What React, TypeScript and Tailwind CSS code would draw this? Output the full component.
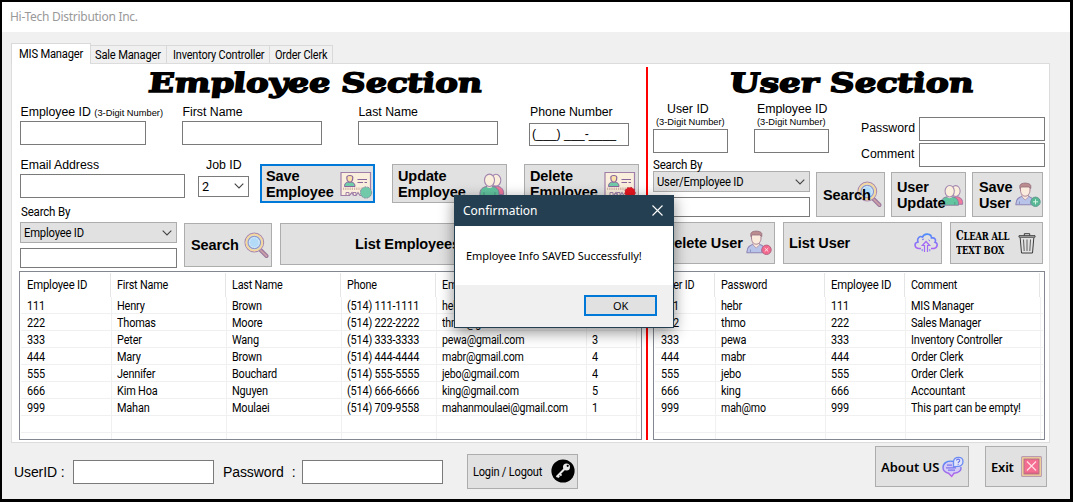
import React from "react";

type IconProps = { className?: string };

function IdCard({ className = "", badge = "green" }: IconProps & { badge?: "green" | "red" }) {
  return (
    <svg className={className} width="33" height="30" viewBox="0 0 33 30" fill="none">
      <path d="M1 1.5H30.5V24.5H20L18 21.5L16 24.5H14L12 21.5L9.5 24.5H1Z" fill="#faefdd" stroke="#a07fa8" strokeWidth="1.2" />
      <path d="M4.5 15.5C4.5 11.5 7 11 9.5 11C12 11 15 11.5 15 15.5Z" fill="#70cba9" stroke="#8a659c" strokeWidth="1" />
      <path d="M6.8 6.5C6.8 3.8 12.8 3.8 12.8 6.5C12.8 9.5 11.5 11.2 9.8 11.2C8.2 11.2 6.8 9.5 6.8 6.5Z" fill="#fbe1a9" stroke="#8a659c" strokeWidth="1.2" />
      <path d="M17.5 8.5H27M17.5 11.5H23M24.5 11.5H27" stroke="#8a659c" strokeWidth="1.2" />
      <path d="M3 17.8H25" stroke="#d5b7ab" strokeWidth="2.4" strokeDasharray="1.2 1" />
      <path d="M6 24.5V21.5H9V24.5M13 24.5V21.5H16V24.5" stroke="#a07fa8" />
      {badge === "green" ? (
        <circle cx="26" cy="21.5" r="5.6" fill="#70c9a8" stroke="#7c86a0" strokeWidth="1" strokeDasharray="2 1" />
      ) : (
        <circle cx="26" cy="21.5" r="5.2" fill="#eb1620" stroke="#b43a4a" strokeWidth="1.2" strokeDasharray="1.5 2" />
      )}
    </svg>
  );
}

function People({ className = "", small = false }: IconProps & { small?: boolean }) {
  return (
    <svg className={className} width={small ? 24 : 26} height={small ? 23 : 24} viewBox="0 0 26 24" fill="none">
      <path d="M14 21.5H24.5C25 16.5 22.5 14 18.5 13.2L14 14Z" fill="#f07a9e" stroke="#9b74a4" />
      <ellipse cx="17" cy="7.2" rx="4.8" ry="5.9" fill="#faefdd" stroke="#a486b0" strokeWidth="1.1" />
      <path d="M1 22.5C0.5 16 3.5 13.5 10.5 13.2C17.5 13.5 20.5 16 20 22.5Z" fill="#63c6a0" stroke="#8d7ba0" />
      <path d="M8 12V14C9 15.2 12 15.2 13 14V12Z" fill="#faefdd" />
      <ellipse cx="10.5" cy="7.3" rx="5" ry="6.2" fill="#faefdd" stroke="#a486b0" strokeWidth="1.1" />
      <path d="M5 22V19M16 22V19" stroke="#4c9f88" />
    </svg>
  );
}

function Magnifier({ className = "" }: IconProps) {
  return (
    <svg className={className} width="26" height="27" viewBox="0 0 26 27" fill="none">
      <path d="M16.5 18L22.5 24" stroke="#9b769d" strokeWidth="4" strokeLinecap="round" />
      <path d="M17 18.6L22.5 24" stroke="#c99fa8" strokeWidth="1.8" strokeLinecap="round" />
      <circle cx="10.3" cy="10.5" r="9.3" fill="#dfe9f7" stroke="#a988ae" strokeWidth="1.2" />
      <circle cx="10.3" cy="10.5" r="7.9" stroke="#f3d79c" strokeWidth="2" />
      <circle cx="10.3" cy="10.5" r="6.3" fill="#b3daf7" stroke="#8f94c4" strokeWidth="1.1" />
      <circle cx="10.3" cy="10.5" r="4.8" stroke="#e3edf8" strokeWidth="1" strokeDasharray="2 1" />
    </svg>
  );
}

function Person({ className = "", badge }: IconProps & { badge: "plus" | "cross" }) {
  return (
    <svg className={className} width="27" height="26" viewBox="0 0 27 26" fill="none">
      <path d="M1 22.8C0.5 17 3.5 14.6 10 13.8C17 14.6 20 17 19.5 22.8Z" fill="#b8c3ea" stroke="#8f86b4" strokeWidth="1.1" />
      <path d="M7 12V15L10.2 18L13.5 15V12Z" fill="#f7e6da" stroke="#a98ea8" strokeWidth="0.8" />
      <path d="M5.5 6C5.5 1.5 15 1.5 15 6V8C15 11.5 13 14.2 10.2 14.2C7.5 14.2 5.5 11.5 5.5 8Z" fill="#faebdc" stroke="#a98295" strokeWidth="1" />
      <path d="M4.8 6.5V3.5C6 0.3 14.5 0.3 15.8 3.5V6.5L14 5H6.5Z" fill="#bb8b8e" stroke="#94707f" strokeWidth="0.8" />
      <path d="M4.5 22.5V19.5M15.5 22V19.5" stroke="#8f94c4" />
      <circle cx="20.5" cy="19.8" r="4.7" fill={badge === "plus" ? "#57b894" : "#f2688c"} stroke={badge === "plus" ? "#639c93" : "#b66586"} />
      {badge === "plus" ? (
        <path d="M18 19.8H23M20.5 17.3V22.3" stroke="#d5f5e4" />
      ) : (
        <path d="M18.7 18L22.3 21.6M22.3 18L18.7 21.6" stroke="#ffe0e6" />
      )}
    </svg>
  );
}

function CloudUp() {
  return (
    <svg width="24" height="20" viewBox="0 0 24 20" fill="none">
      <defs>
        <linearGradient id="cloud" x1="0" y1="0" x2="0" y2="1">
          <stop stopColor="#4f8dfb" />
          <stop offset="1" stopColor="#aa65f4" />
        </linearGradient>
      </defs>
      <path d="M7 15.5H4.5C0 15 0 9.5 4 9C2.5 4.5 6.5 2.5 8.5 4.2C10 -0.3 17.5 0.3 17.5 5C21 4.2 22.3 7 21 9.2C24.5 10 23.5 15 20 15.5H17" stroke="url(#cloud)" strokeWidth="1.6" />
      <path d="M10.5 19V12.5H8.3L12 8.5L15.7 12.5H13.5V19" stroke="#a26af5" strokeWidth="1.2" />
      <path d="M8.2 18.2V16M15.8 18.2V16M8 6.8L10 6M14.5 6.8L16 8" stroke="#7b7cf6" />
    </svg>
  );
}

function Trash({ className = "" }: IconProps) {
  return (
    <svg className={className} width="18" height="21" viewBox="0 0 18 21" fill="none" stroke="#3c3c3c">
      <path d="M1 4.2V2.7H17V4.2Z" strokeWidth="1" />
      <path d="M6.3 2.5V0.7H11.7V2.5M2.2 5L3.5 20H14.5L15.8 5" />
      <path d="M5.5 6.5L6.2 18M9 6.5V18M12.5 6.5L11.8 18" strokeWidth="0.8" />
    </svg>
  );
}

function KeyBadge({ className = "" }: IconProps) {
  return (
    <svg className={className} width="24" height="24" viewBox="0 0 24 24" fill="none">
      <circle cx="12" cy="12" r="11.6" fill="#000" />
      <circle cx="15.5" cy="8" r="3.5" fill="#e9e9e9" />
      <circle cx="16.7" cy="6.8" r="1.1" fill="#000" />
      <path d="M13.5 10L5.5 18M8.8 14.9L10.5 16.6M6.8 16.8L8.2 18.2" stroke="#e9e9e9" strokeWidth="2" />
    </svg>
  );
}

function ChatHelp() {
  return (
    <svg width="22" height="22" viewBox="0 0 22 22" fill="none">
      <defs>
        <linearGradient id="chat" x1="0" y1="0" x2="0" y2="1">
          <stop stopColor="#5488f5" />
          <stop offset="1" stopColor="#bb60e9" />
        </linearGradient>
      </defs>
      <path d="M12 5.5C5 4 1 7.5 1 11.5C1 15 3.5 16.5 6.5 17.2L9.7 20.5L12 17.3C17 17 19.5 14.5 19 11" fill="#d3cbf5" stroke="url(#chat)" strokeWidth="1.4" />
      <path d="M11.5 10.5V5.5C12 0 21 0 21 5.5C21 9 18.5 10.5 15.5 10.3L11.5 11Z" fill="#e2e5fa" stroke="#6c8cf2" strokeWidth="1.3" />
      <path d="M14.5 4.5C14.7 2.5 18 2.7 17.7 4.8C17.5 5.8 16.2 5.8 16.2 7V7.3M16.2 8.2V9" stroke="#6572e8" strokeWidth="1.1" />
      <path d="M5 9.2H10M4 11.8H14M6 14.2H13" stroke="#7d75ee" strokeWidth="1.3" />
    </svg>
  );
}

function ExitIcon() {
  return (
    <svg width="21" height="21" viewBox="0 0 21 21" fill="none">
      <rect x="0.6" y="0.6" width="19.8" height="19.8" rx="1" fill="#f6d796" stroke="#b99ab0" strokeWidth="1.1" />
      <rect x="3" y="3" width="15" height="15" fill="#f46c90" stroke="#ad7288" />
      <path d="M6 5.5L15 14.5M15 5.5L6 14.5" stroke="#ffe0e5" strokeWidth="1.2" />
      <path d="M4.5 17H17" stroke="#bd5675" strokeDasharray="1 1" />
    </svg>
  );
}

function Chevron() {
  return (
    <svg width="10" height="6" viewBox="0 0 10 6" fill="none" stroke="#444" strokeWidth="1.1">
      <path d="M0.7 0.7L5 5L9.3 0.7" />
    </svg>
  );
}

function Box({ className = "" }: { className?: string }) {
  return <div className={`shrink-0 border border-[#7a7a7a] bg-white ${className}`} />;
}

function Label({ children, className = "" }: { children: React.ReactNode; className?: string }) {
  return (
    <div className={`whitespace-nowrap pl-px font-['Liberation_Sans',sans-serif] text-[12.3px] leading-4 tracking-normal ${className}`}>{children}</div>
  );
}

function Narrow({ children, className = "scale-x-[0.9]" }: { children: React.ReactNode; className?: string }) {
  return <span className={`inline-block origin-left whitespace-nowrap ${className}`}>{children}</span>;
}

function Field({ label, className }: { label: React.ReactNode; className: string }) {
  return (
    <div className={`shrink-0 ${className}`}>
      <Label className="h-[17px] pl-[0.5px]!">{label}</Label>
      <Box className="h-6 w-full" />
    </div>
  );
}

function Combo({ text, className = "" }: { text: string; className?: string }) {
  return (
    <div className={`flex shrink-0 items-center justify-between border pl-[3px] pr-1 ${className}`}>
      <Narrow className="scale-x-[0.935]">{text}</Narrow>
      <Chevron />
    </div>
  );
}

function Button({ children, className = "", focused = false }: { children: React.ReactNode; className?: string; focused?: boolean }) {
  return (
    <div className={`flex shrink-0 items-center bg-[#e1e1e1] ${focused ? "border-2 border-[#0078d7]" : "border border-[#adadad]"} ${className}`}>
      {children}
    </div>
  );
}

function BoldText({ children, className = "" }: { children: React.ReactNode; className?: string }) {
  return (
    <span className={`shrink-0 whitespace-nowrap font-['Liberation_Sans',sans-serif] text-[14.5px] font-bold leading-4 tracking-[-0.1px] ${className}`}>
      {children}
    </span>
  );
}

function Table({ headers, rows, widths, className = "" }: { headers: string[]; rows: string[][]; widths: string[]; className?: string }) {
  return (
    <div className={`flex flex-col overflow-hidden border border-[#828790] bg-white px-px ${className}`}>
      <div className="flex h-[25px] shrink-0 pt-px">
        {headers.map((h, i) => (
          <div key={i} className={`shrink-0 overflow-hidden whitespace-nowrap border-r border-[#e5e5e5] pl-1.5 leading-6 ${widths[i]}`}>
            <Narrow className={h === "Employee ID" ? "scale-x-[0.94]" : "scale-x-[0.9]"}>{h}</Narrow>
          </div>
        ))}
      </div>
      {rows.map((row, r) => (
        <div key={r} className="flex h-[17px] shrink-0 border-b border-[#f0f0f0] pl-px">
          {row.map((cell, i) => (
            <div key={i} className={`shrink-0 whitespace-nowrap border-r border-[#f0f0f0] pl-[5px] leading-[18px] ${widths[i]}`}>
              <Narrow className={cell.includes("@") ? "scale-x-[0.885]" : "scale-x-[0.91]"}>{cell}</Narrow>
            </div>
          ))}
        </div>
      ))}
    </div>
  );
}

const employees = [
  ["111", "Henry", "Brown", "(514) 111-1111", "hebr@gmail.com", "1"],
  ["222", "Thomas", "Moore", "(514) 222-2222", "thmo@gmail.com", "2"],
  ["333", "Peter", "Wang", "(514) 333-3333", "pewa@gmail.com", "3"],
  ["444", "Mary", "Brown", "(514) 444-4444", "mabr@gmail.com", "4"],
  ["555", "Jennifer", "Bouchard", "(514) 555-5555", "jebo@gmail.com", "4"],
  ["666", "Kim Hoa", "Nguyen", "(514) 666-6666", "king@gmail.com", "5"],
  ["999", "Mahan", "Moulaei", "(514) 709-9558", "mahanmoulaei@gmail.com", "1"],
  ["", "", "", "", "", ""],
  ["", "", "", "", "", ""],
];

const users = [
  ["111", "hebr", "111", "MIS Manager"],
  ["222", "thmo", "222", "Sales Manager"],
  ["333", "pewa", "333", "Inventory Controller"],
  ["444", "mabr", "444", "Order Clerk"],
  ["555", "jebo", "555", "Order Clerk"],
  ["666", "king", "666", "Accountant"],
  ["999", "mah@mo", "999", "This part can be empty!"],
  ["", "", "", ""],
  ["", "", "", ""],
];

function SectionTitle({ children, className = "", scale }: { children: string; className?: string; scale: string }) {
  return (
    <div className={`mt-[3px] ${className}`}>
      <span className={`inline-block origin-bottom-left skew-x-[6deg] whitespace-nowrap font-['DejaVu_Serif',serif] text-[26.5px] font-bold italic leading-8 tracking-[-0.2px] [-webkit-text-stroke:1.5px_black] ${scale}`}>
        {children}
      </span>
    </div>
  );
}

function EmployeeSection() {
  return (
    <section className="flex w-[634px] shrink-0 flex-col pl-2">
      <SectionTitle scale="scale-x-[1.275]" className="ml-[131px] h-[37px] w-[333px]">Employee Section</SectionTitle>
      <div className="flex h-[53px]">
        <Field className="w-[126px]" label={<>Employee ID <span className="text-[9.3px]">(3-Digit Number)</span></>} />
        <Field className="ml-9 w-[140px]" label="First Name" />
        <Field className="ml-9 w-[140px]" label="Last Name" />
        <div className="ml-[31px] w-[100px]">
          <Label className="h-[19px] tracking-[0.1px]">Phone Number</Label>
          <div className="h-[23px] whitespace-nowrap border border-[#7a7a7a] pl-[2px] font-['Liberation_Sans',sans-serif] text-[12.3px] leading-[21px] tracking-normal">(___) ___-____</div>
        </div>
      </div>
      <div className="flex h-[47px]">
        <Field className="w-[165px]" label="Email Address" />
        <div className="ml-[13px] w-[51px]">
          <Label className="h-[19px] pl-2!">Job ID</Label>
          <Combo text="2" className="h-[21px] border-[#7a7a7a] bg-white pb-px text-[13.5px]" />
        </div>
        <Button focused className="ml-[11px] mt-[7px] h-[39px] w-[115px] pl-1">
          <BoldText>Save<br />Employee</BoldText>
          <IdCard className="ml-[6px] mt-1 shrink-0" />
        </Button>
        <Button className="ml-[17px] mt-[7px] h-[39px] w-[115px] pl-[5px]">
          <BoldText>Update<br />Employee</BoldText>
          <People className="ml-[13px] mt-[3px] shrink-0" />
        </Button>
        <Button className="ml-[17px] mt-[7px] h-[39px] w-[115px] overflow-hidden pl-[5px]">
          <BoldText>Delete<br />Employee</BoldText>
          <IdCard badge="red" className="ml-[6px] mt-1 shrink-0" />
        </Button>
      </div>
      <div className="flex h-[67px]">
        <div className="w-[157px]">
          <div className="h-[18px] pl-px leading-4"><Narrow className="scale-x-[0.96]">Search By</Narrow></div>
          <Combo text="Employee ID" className="h-[21px] border-[#adadad] bg-[#e1e1e1]" />
          <Box className="mt-[5px] h-5" />
        </div>
        <Button className="ml-[7px] mt-[19px] h-11 w-[88px] pl-[6px]">
          <BoldText>Search</BoldText>
          <Magnifier className="ml-[5px] shrink-0" />
        </Button>
        <Button className="ml-2 mt-[19px] h-[42px] w-[360px] pl-[74px]">
          <BoldText>List Employees</BoldText>
        </Button>
      </div>
      <Table
        className="-ml-px h-[169px] w-[623px]"
        headers={["Employee ID", "First Name", "Last Name", "Phone", "Email", "Job ID"]}
        rows={employees}
        widths={["w-[90px]", "w-[115px]", "w-[115px]", "w-[95px]", "w-[150px]", "w-[50px]"]}
      />
    </section>
  );
}

function UserSection() {
  const hint = "h-[14px] whitespace-nowrap pl-[3px] font-['Liberation_Sans',sans-serif] text-[9.3px] leading-[14px] tracking-normal";
  return (
    <section className="ml-[5px] flex w-[396px] shrink-0 flex-col">
      <SectionTitle scale="scale-x-[1.3]" className="ml-[79px] h-[33px] w-[242px]">User Section</SectionTitle>
      <div className="flex h-[57px] pt-px">
        <div className="w-[75px]">
          <Label className="h-3.5 pl-[14px]!">User ID</Label>
          <div className={hint}>(3-Digit Number)</div>
          <Box className="h-6" />
        </div>
        <div className="ml-[26px] w-[75px]">
          <Label className="h-3.5 pl-[3px]!">Employee ID</Label>
          <div className={hint}>(3-Digit Number)</div>
          <Box className="h-6" />
        </div>
        <div className="ml-[31px] mt-4 w-[185px]">
          <div className="flex h-[26px]">
            <Label className="w-[59px] pt-[3px]">Password</Label>
            <Box className="h-6 w-[126px]" />
          </div>
          <div className="flex">
            <Label className="w-[59px] pt-[3px]">Comment</Label>
            <Box className="h-6 w-[126px]" />
          </div>
        </div>
      </div>
      <div className="flex h-[65px]">
        <div className="w-[157px]">
          <div className="h-[14px] leading-4"><Narrow className="scale-x-[0.96]">Search By</Narrow></div>
          <Combo text="User/Employee ID" className="h-[21px] border-[#adadad] bg-[#e1e1e1]" />
          <Box className="mt-[5px] h-5" />
        </div>
        <Button className="ml-[6px] mt-[15px] h-[45px] w-[69px] pl-[6px]">
          <BoldText className="z-10">Search</BoldText>
          <Magnifier className="-ml-[14px] shrink-0" />
        </Button>
        <Button className="ml-[6px] mt-[15px] h-[45px] w-[75px] pl-[5px]">
          <BoldText className="z-10">User<br />Update</BoldText>
          <People small className="-ml-[6px] mt-0.5 shrink-0" />
        </Button>
        <Button className="ml-[6px] mt-[15px] h-[45px] w-[71px] pl-[6px]">
          <BoldText>Save<br />User</BoldText>
          <Person badge="plus" className="ml-[3px] shrink-0" />
        </Button>
      </div>
      <div className="flex h-[49px]">
        <Button className="h-[42px] w-[122px] pl-[10px]">
          <BoldText>Delete User</BoldText>
          <Person badge="cross" className="ml-[3px] shrink-0" />
        </Button>
        <Button className="ml-2 h-[42px] w-[159px] justify-between pl-[5px] pr-[3px]">
          <BoldText>List User</BoldText>
          <CloudUp />
        </Button>
        <Button className="ml-2 h-[42px] w-[93px] pl-[5px]">
          <div className="flex w-[62px] shrink-0 flex-col items-start font-['DejaVu_Serif',serif] text-[10.5px] font-bold leading-[14px] tracking-[-0.2px]">
            <Narrow className="scale-x-[0.8]"><span className="text-[12px]">C</span>LEAR ALL</Narrow>
            <Narrow className="scale-x-[0.8]">TEXT BOX</Narrow>
          </div>
          <Trash className="shrink-0" />
        </Button>
      </div>
      <Table
        className="h-[169px] w-[392px]"
        headers={["User ID", "Password", "Employee ID", "Comment"]}
        rows={users}
        widths={["w-[60px]", "w-[110px]", "w-[80px]", "w-[135px]"]}
      />
    </section>
  );
}

function Confirmation() {
  return (
    <div className="absolute left-[452px] top-[193px] flex h-[133px] w-[220px] flex-col border border-[#243f52] bg-white font-['Noto_Sans',sans-serif] text-[11px] shadow-[0_4px_14px_rgba(0,0,0,0.45)]">
      <div className="flex h-[30px] items-center justify-between bg-[#243f52] pl-2 pr-[10px] text-[12px] tracking-normal text-white">
        <span>Confirmation</span>
        <svg className="-mt-0.5" width="11" height="11" viewBox="0 0 11 11" stroke="white" strokeWidth="1.1">
          <path d="M0.5 0.5L10.5 10.5M10.5 0.5L0.5 10.5" />
        </svg>
      </div>
      <div className="flex h-[59px] items-center pl-[11px]">
        <span className="whitespace-nowrap tracking-[-0.08px]">Employee Info SAVED Successfully!</span>
      </div>
      <div className="flex flex-1 items-start justify-end bg-[#f0f0f0] pr-4 pt-[10px]">
        <div className="flex h-[21px] w-[73px] items-center justify-center border-2 border-[#0078d7] bg-[#e1e1e1]">OK</div>
      </div>
    </div>
  );
}

export default function App() {
  const tab = "flex h-[18px] items-center whitespace-nowrap border-r border-t border-[#d9d9d9] bg-[#f0f0f0] pt-px";
  return (
    <div className="relative flex h-[502px] w-[1073px] flex-col overflow-hidden border-b-[3px] border-l-2 border-r-[3px] border-t-2 border-black bg-[#f0f0f0] font-[Roboto,sans-serif] text-[12px] leading-4 tracking-[-0.2px] text-black">
      <header className="flex h-[30px] shrink-0 items-center bg-white pl-2 font-['Noto_Sans',sans-serif] text-[12px] tracking-[-0.28px] text-[#999]">
        Hi-Tech Distribution Inc.
      </header>
      <nav className="ml-[9px] mt-[11px] flex h-5 shrink-0 items-end">
        <div className="z-10 -mb-px flex h-[21px] w-20 items-center self-start whitespace-nowrap border border-b-0 border-[#d9d9d9] bg-white pb-px pl-[7px]">
          <Narrow className="scale-x-[0.93]">MIS Manager</Narrow>
        </div>
        <div className={`${tab} w-[76px] pl-1`}><Narrow className="scale-x-[0.93]">Sale Manager</Narrow></div>
        <div className={`${tab} w-[103px] pl-[6px]`}><Narrow className="scale-x-[0.91]">Inventory Controller</Narrow></div>
        <div className={`${tab} w-[63px] pl-[5px]`}><Narrow className="scale-x-[0.91]">Order Clerk</Narrow></div>
      </nav>
      <main className="ml-[9px] flex h-[380px] w-[1039px] shrink-0 border border-[#dcdcdc] bg-white">
        <EmployeeSection />
        <div className="mt-[3px] h-[373px] w-[2px] shrink-0 bg-[#f00]" />
        <UserSection />
      </main>
      <footer className="flex h-[56px] shrink-0 pl-3">
        <div className="mt-[20px] w-[59px] whitespace-nowrap font-['Liberation_Sans',sans-serif] text-[14px] leading-[18px] tracking-[-0.1px]">UserID :</div>
        <Box className="mt-[17px] h-6 w-[141px]" />
        <div className="ml-[9px] mt-[20px] flex w-[79px] gap-2 font-['Liberation_Sans',sans-serif] text-[14px] leading-[18px] tracking-[-0.1px]">
          <span>Password</span>
          <span>:</span>
        </div>
        <Box className="mt-[17px] h-6 w-[141px]" />
        <Button className="ml-6 mt-[11px] h-[35px] w-[111px] pl-[5px]">
          <div className="w-[78px]"><Narrow className="scale-x-[0.92]">Login / Logout</Narrow></div>
          <KeyBadge className="-mt-0.5 shrink-0" />
        </Button>
        <Button className="ml-[297px] mt-[3px] h-[41px] w-[94px] justify-between pl-[5px] pr-1 font-['Noto_Sans',sans-serif] text-[13px] font-semibold tracking-[-0.05px]">
          <span className="whitespace-nowrap">About US</span>
          <ChatHelp />
        </Button>
        <Button className="ml-4 mt-[3px] h-[41px] w-[62px] justify-between pl-[5px] pr-1 font-['Noto_Sans',sans-serif] text-[13px] font-semibold tracking-[-0.2px]">
          <span>Exit</span>
          <ExitIcon />
        </Button>
      </footer>
      <Confirmation />
    </div>
  );
}
